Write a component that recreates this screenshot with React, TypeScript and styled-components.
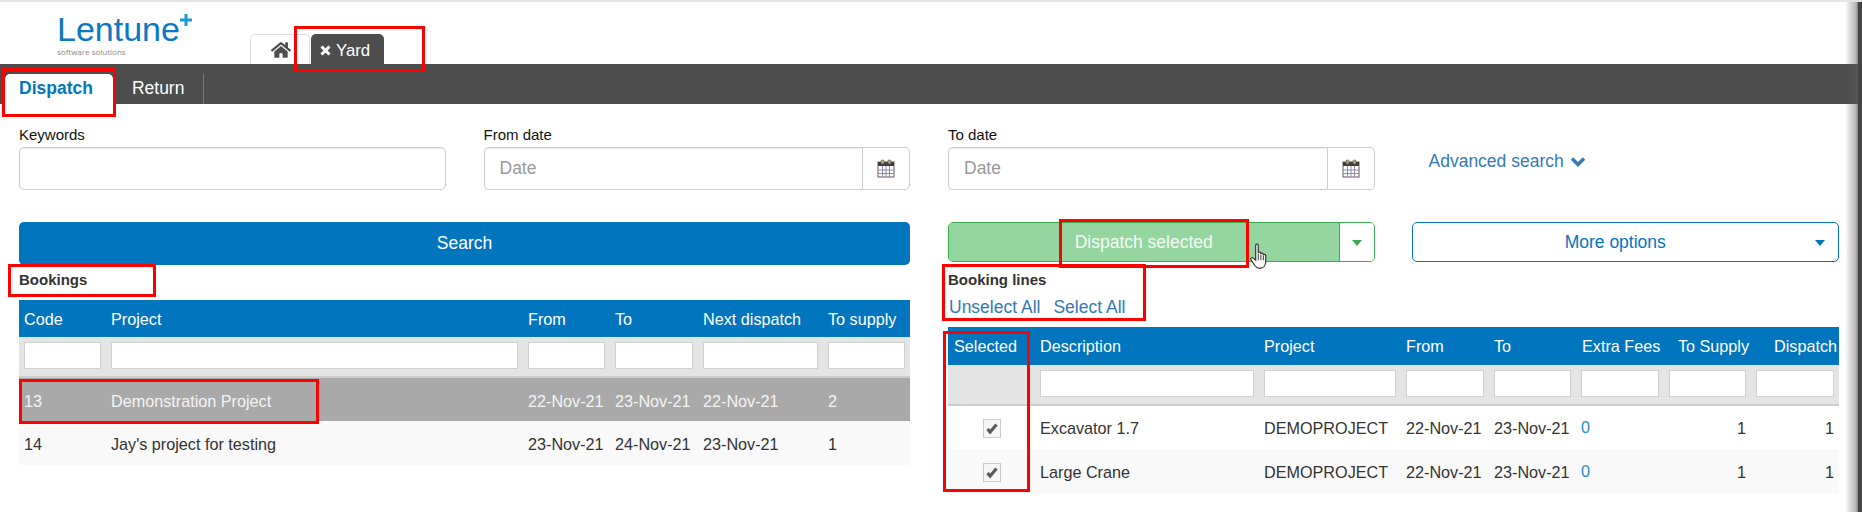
import React from 'react';
import styled, { createGlobalStyle } from 'styled-components';
import { FaHome } from 'react-icons/fa';

const GlobalStyle = createGlobalStyle`
	html, body {
		margin: 0;
		padding: 0;
		background: #fff;
		overflow: hidden;
	}
	* {
		box-sizing: border-box;
	}
`;

const Page = styled.div`
	position: relative;
	width: 1862px;
	height: 512px;
	overflow: hidden;
	border-top: 2px solid #e4e4e4;
	font-family: 'Liberation Sans', Arial, sans-serif;
	font-size: 16.2px;
	color: #333;
`;

const Header = styled.header`
	display: flex;
	align-items: flex-end;
	height: 62px;
	padding-left: 57px;
`;

const Logo = styled.div`
	position: relative;
	width: 193px;
	align-self: flex-start;
	padding-top: 9px;
`;

const LogoWord = styled.div`
	font-size: 34px;
	line-height: 36px;
	color: #0b78bf;
`;

const LogoPlus = styled.svg`
	position: absolute;
	left: 122px;
	top: 11px;
`;

const LogoTag = styled.div`
	font-family: 'Open Sans', sans-serif;
	font-size: 8px;
	line-height: 10px;
	color: #8a8a8a;
`;

const Tab = styled.div<{ $dark?: boolean }>`
	display: flex;
	align-items: center;
	justify-content: ${(p) => (p.$dark ? 'flex-start' : 'center')};
	gap: 5px;
	width: ${(p) => (p.$dark ? '73px' : '60px')};
	height: 30px;
	margin-right: 1px;
	padding: ${(p) => (p.$dark ? '3px 0 0 9px' : '0 0 0 2px')};
	border: ${(p) => (p.$dark ? 'none' : '1px solid #ddd')};
	border-bottom: none;
	border-radius: 5px 5px 0 0;
	background: ${(p) => (p.$dark ? '#4d4d4d' : '#fff')};
	color: ${(p) => (p.$dark ? '#fff' : '#4d4d4d')};
	font-size: 16.8px;
`;

const NavBar = styled.nav`
	display: flex;
	align-items: flex-end;
	height: 40px;
	padding-left: 5px;
	background: #4d4d4d;
	font-size: 17.5px;
`;

const NavItem = styled.div<{ $active?: boolean }>`
	height: 30px;
	padding: 4px ${(p) => (p.$active ? '20px' : '19px')} 0 ${(p) => (p.$active ? '14px' : '19px')};
	line-height: 20px;
	border-radius: ${(p) => (p.$active ? '5px 5px 0 0' : '0')};
	border-right: ${(p) => (p.$active ? 'none' : '1px solid #777')};
	background: ${(p) => (p.$active ? '#fff' : 'transparent')};
	color: ${(p) => (p.$active ? '#0275bf' : '#fff')};
	font-weight: ${(p) => (p.$active ? 700 : 400)};
`;

const Content = styled.main`
	padding: 22px 23px 0 19px;
`;

const FormGrid = styled.section`
	display: grid;
	grid-template-columns: repeat(4, 1fr);
	column-gap: 38px;
	row-gap: 32px;
`;

const Field = styled.div`
	display: flex;
	flex-direction: column;
`;

const Label = styled.label`
	height: 21px;
	font-size: 15px;
	line-height: 18px;
	color: #111;
`;

const TextBox = styled.input`
	flex: 1;
	min-width: 0;
	height: 43px;
	padding: 0 15px;
	border: 1px solid #ccc;
	border-radius: 5px;
	box-shadow: inset 0 1px 1px rgba(0, 0, 0, 0.075);
	font-family: inherit;
	font-size: 17.5px;
	color: #555;
	outline: none;
	&::placeholder {
		color: #999;
		opacity: 1;
	}
`;

const DateGroup = styled.div`
	display: flex;
	${TextBox} {
		border-radius: 5px 0 0 5px;
		border-right: none;
	}
`;

const DateAddon = styled.div`
	display: flex;
	align-items: center;
	justify-content: center;
	width: 48px;
	height: 43px;
	border: 1px solid #ccc;
	border-radius: 0 5px 5px 0;
	background: #fff;
`;

const AdvancedLink = styled.a`
	display: flex;
	align-items: center;
	gap: 6px;
	height: 24px;
	margin: 23px 0 0 16px;
	font-size: 17.5px;
	color: #337ab7;
`;

const SearchButton = styled.button`
	grid-column: span 2;
	height: 43px;
	border: none;
	border-radius: 5px;
	background: #0275bf;
	color: #fff;
	font-family: inherit;
	font-size: 17.5px;
`;

const SplitButton = styled.div`
	display: flex;
	height: 40px;
	border: 1px solid #3aab4f;
	border-radius: 5px;
	overflow: hidden;
`;

const SplitLabel = styled.div`
	flex: 1;
	display: flex;
	align-items: center;
	justify-content: center;
	background: #95d5a0;
	color: #f4fbf5;
	font-size: 17.5px;
`;

const SplitToggle = styled.div`
	display: flex;
	align-items: center;
	justify-content: center;
	width: 35px;
	border-left: 1px solid #3aab4f;
	background: #fff;
`;

const Caret = styled.span<{ $color: string }>`
	display: block;
	margin-top: 2px;
	border-top: 6px solid ${(p) => p.$color};
	border-left: 5px solid transparent;
	border-right: 5px solid transparent;
`;

const OptionsButton = styled.div`
	display: flex;
	align-items: center;
	height: 40px;
	margin-left: -1px;
	padding-right: 13px;
	border: 1px solid #0275bf;
	border-radius: 5px;
	color: #0275bf;
	font-size: 17.5px;
`;

const OptionsLabel = styled.span`
	flex: 1;
	padding-left: 3px;
	text-align: center;
`;

const Panels = styled.section`
	display: grid;
	grid-template-columns: 891px 891px;
	column-gap: 38px;
`;

const Panel = styled.div`
	padding-top: 5px;
`;

const PanelTitle = styled.h4<{ $tight?: boolean }>`
	margin: 0 0 ${(p) => (p.$tight ? '6px' : '10px')};
	font-size: 15px;
	line-height: 20px;
	font-weight: 700;
	color: #333;
`;

const SelectLinks = styled.div`
	display: flex;
	gap: 13px;
	height: 22px;
	margin: 0 0 9px 1px;
	font-size: 17.5px;
	line-height: 22px;
	color: #337ab7;
`;

const Table = styled.table<{ $rowNudge: number; $headNudge: number }>`
	width: 891px;
	table-layout: fixed;
	border-collapse: collapse;
	font-size: 16.2px;
	thead th {
		padding-top: ${(p) => p.$headNudge}px;
	}
	tbody td {
		padding-top: ${(p) => p.$rowNudge}px;
	}
`;

const Col = styled.col<{ $w: number }>`
	width: ${(p) => p.$w}px;
`;

const HeadRow = styled.tr<{ $h: number }>`
	height: ${(p) => p.$h}px;
	background: #0275bf;
`;

const HeadCell = styled.th<{ $right?: boolean; $inset?: number }>`
	padding: 0 ${(p) => (p.$right ? '2px' : '0')} 0 ${(p) => p.$inset ?? 5}px;
	font-weight: 400;
	color: #fff;
	text-align: ${(p) => (p.$right ? 'right' : 'left')};
	white-space: nowrap;
`;

const FilterRow = styled.tr`
	height: 40px;
	background: #e4e4e4;
	border-bottom: 2px solid #ccc;
`;

const FilterCell = styled.td`
	padding: 0 5px 2px;
`;

const FilterInput = styled.input`
	display: block;
	width: 100%;
	height: 27px;
	border: 1.5px solid #cfcfcf;
	border-radius: 0;
	background: #fff;
	outline: none;
`;

const Row = styled.tr<{ $h: number; $tone?: 'active' | 'alt' }>`
	height: ${(p) => p.$h}px;
	background: ${(p) => (p.$tone === 'active' ? '#a9a9a9' : p.$tone === 'alt' ? '#f9f9f9' : '#fff')};
	color: ${(p) => (p.$tone === 'active' ? '#f4f4f4' : '#333')};
`;

const Cell = styled.td<{ $right?: boolean; $center?: boolean }>`
	padding: 0 5px;
	text-align: ${(p) => (p.$right ? 'right' : p.$center ? 'center' : 'left')};
	white-space: nowrap;
`;

const FeeLink = styled.a`
	position: relative;
	top: -1px;
	color: #2a8ccc;
`;

const CheckBox = styled.span`
	display: inline-flex;
	align-items: center;
	justify-content: center;
	vertical-align: middle;
	width: 18px;
	height: 19px;
	margin-top: -2px;
	border: 1px solid #ccc;
	background: #f6f6f6;
`;

const Mark = styled.div<{ $x: number; $y: number; $w: number; $h: number }>`
	position: absolute;
	left: ${(p) => p.$x}px;
	top: ${(p) => p.$y - 2}px;
	width: ${(p) => p.$w}px;
	height: ${(p) => p.$h}px;
	border: 3px solid #f00;
	pointer-events: none;
`;

const Cursor = styled.svg`
	position: absolute;
	left: 1249px;
	top: 241px;
`;

const WindowEdge = styled.div`
	position: absolute;
	top: -2px;
	right: 0;
	bottom: 0;
	width: 17px;
	background: linear-gradient(
		to right,
		rgba(90, 90, 90, 0) 0,
		rgba(90, 90, 90, 0.45) 11px,
		rgba(90, 90, 90, 0.8) 13px,
		#444 13px,
		#444 100%
	);
`;

const CalendarIcon = () => (
	<svg width='18' height='19' viewBox='0 0 18 19'>
		<rect x='1' y='3' width='16' height='15' fill='#fff' stroke='#6d5560' />
		<rect x='1' y='3' width='16' height='4' fill='#3f3f3f' />
		<path d='M1 11h16M1 14.5h16M5.5 7v11M9 7v11M12.5 7v11' stroke='#8d88ad' strokeWidth='1' fill='none' />
		<rect x='4' y='1' width='3' height='4' rx='1' fill='#d9a441' stroke='#2f5f8f' strokeWidth='0.6' />
		<rect x='11' y='1' width='3' height='4' rx='1' fill='#d9a441' stroke='#2f5f8f' strokeWidth='0.6' />
	</svg>
);

const CheckIcon = () => (
	<svg width='14' height='13' viewBox='0 0 14 13'>
		<path d='M2.5 7l2.6 3L11.5 2.5' fill='none' stroke='#5a5a5a' strokeWidth='3.2' />
	</svg>
);

const CloseIcon = () => (
	<svg width='11' height='11' viewBox='0 0 11 11'>
		<path d='M1.5 1.5l8 8M9.5 1.5l-8 8' fill='none' stroke='#fff' strokeWidth='3' />
	</svg>
);

const ChevronIcon = () => (
	<svg width='16' height='11' viewBox='0 0 16 11'>
		<path d='M2 2.5l6 6 6-6' fill='none' stroke='#337ab7' strokeWidth='3.4' />
	</svg>
);

const bookingCols = [87, 417, 87, 88, 125, 87];
const lineCols = [87, 224, 142, 88, 87, 88, 87, 88];
const lines = ['Excavator 1.7', 'Large Crane'];

const App = () => {
	return (
		<Page>
			<GlobalStyle />
			<Header>
				<Logo>
					<LogoWord>Lentune</LogoWord>
					<LogoTag>software solutions</LogoTag>
					<LogoPlus width='14' height='14' viewBox='0 0 14 14'>
						<path d='M7 1v12M1 7h12' stroke='#1b9ad6' strokeWidth='3' />
					</LogoPlus>
				</Logo>
				<Tab>
					<FaHome size={20} />
				</Tab>
				<Tab $dark>
					<CloseIcon />
					Yard
				</Tab>
			</Header>
			<NavBar>
				<NavItem $active>Dispatch</NavItem>
				<NavItem>Return</NavItem>
			</NavBar>
			<Content>
				<FormGrid>
					<Field>
						<Label>Keywords</Label>
						<TextBox readOnly />
					</Field>
					<Field>
						<Label>From date</Label>
						<DateGroup>
							<TextBox readOnly placeholder='Date' />
							<DateAddon>
								<CalendarIcon />
							</DateAddon>
						</DateGroup>
					</Field>
					<Field>
						<Label>To date</Label>
						<DateGroup>
							<TextBox readOnly placeholder='Date' />
							<DateAddon>
								<CalendarIcon />
							</DateAddon>
						</DateGroup>
					</Field>
					<AdvancedLink>
						Advanced search <ChevronIcon />
					</AdvancedLink>
					<SearchButton>Search</SearchButton>
					<SplitButton>
						<SplitLabel>Dispatch selected</SplitLabel>
						<SplitToggle>
							<Caret $color='#3aab4f' />
						</SplitToggle>
					</SplitButton>
					<OptionsButton>
						<OptionsLabel>More options</OptionsLabel>
						<Caret $color='#0275bf' />
					</OptionsButton>
				</FormGrid>
				<Panels>
					<Panel>
						<PanelTitle>Bookings</PanelTitle>
						<Table $rowNudge={3} $headNudge={2}>
							<colgroup>
								{bookingCols.map((w, i) => (
									<Col key={i} $w={w} />
								))}
							</colgroup>
							<thead>
								<HeadRow $h={37}>
									<HeadCell>Code</HeadCell>
									<HeadCell>Project</HeadCell>
									<HeadCell>From</HeadCell>
									<HeadCell>To</HeadCell>
									<HeadCell>Next dispatch</HeadCell>
									<HeadCell>To supply</HeadCell>
								</HeadRow>
								<FilterRow>
									{bookingCols.map((_, i) => (
										<FilterCell key={i}>
											<FilterInput readOnly />
										</FilterCell>
									))}
								</FilterRow>
							</thead>
							<tbody>
								<Row $h={44} $tone='active'>
									<Cell>13</Cell>
									<Cell>Demonstration Project</Cell>
									<Cell>22-Nov-21</Cell>
									<Cell>23-Nov-21</Cell>
									<Cell>22-Nov-21</Cell>
									<Cell>2</Cell>
								</Row>
								<Row $h={44} $tone='alt'>
									<Cell>14</Cell>
									<Cell>Jay's project for testing</Cell>
									<Cell>23-Nov-21</Cell>
									<Cell>24-Nov-21</Cell>
									<Cell>23-Nov-21</Cell>
									<Cell>1</Cell>
								</Row>
							</tbody>
						</Table>
					</Panel>
					<Panel>
						<PanelTitle $tight>Booking lines</PanelTitle>
						<SelectLinks>
							<a>Unselect All</a>
							<a>Select All</a>
						</SelectLinks>
						<Table $rowNudge={2} $headNudge={0}>
							<colgroup>
								{lineCols.map((w, i) => (
									<Col key={i} $w={w} />
								))}
							</colgroup>
							<thead>
								<HeadRow $h={38}>
									<HeadCell $inset={6}>Selected</HeadCell>
									<HeadCell>Description</HeadCell>
									<HeadCell>Project</HeadCell>
									<HeadCell>From</HeadCell>
									<HeadCell>To</HeadCell>
									<HeadCell $inset={6}>Extra Fees</HeadCell>
									<HeadCell $right>To Supply</HeadCell>
									<HeadCell $right>Dispatch</HeadCell>
								</HeadRow>
								<FilterRow>
									{lineCols.map((_, i) => (
										<FilterCell key={i}>{i > 0 && <FilterInput readOnly />}</FilterCell>
									))}
								</FilterRow>
							</thead>
							<tbody>
								{lines.map((name, i) => (
									<Row key={name} $h={44} $tone={i % 2 ? 'alt' : undefined}>
										<Cell $center>
											<CheckBox>
												<CheckIcon />
											</CheckBox>
										</Cell>
										<Cell>{name}</Cell>
										<Cell>DEMOPROJECT</Cell>
										<Cell>22-Nov-21</Cell>
										<Cell>23-Nov-21</Cell>
										<Cell>
											<FeeLink>0</FeeLink>
										</Cell>
										<Cell $right>1</Cell>
										<Cell $right>1</Cell>
									</Row>
								))}
							</tbody>
						</Table>
					</Panel>
				</Panels>
			</Content>
			<Cursor width='22' height='28' viewBox='0 0 20 26'>
				<path
					d='M6 2.2c0-1.6 2.4-1.6 2.4 0v7.3c0-1.5 2.3-1.5 2.3 0v1c0-1.4 2.3-1.4 2.3 0v1c0-1.3 2.3-1.3 2.3 0v6c0 3.4-2.2 6-5.4 6H9.5c-2 0-3.2-1-4.2-2.4L1.6 15.6c-.9-1.4 1-2.8 2.2-1.6L6 16V2.2z'
					fill='#fff'
					stroke='#333'
					strokeWidth='1.1'
				/>
				<path d='M8.4 10v6M10.8 11v5M13.1 12v4' stroke='#333' strokeWidth='0.9' fill='none' />
			</Cursor>
			<Mark $x={294} $y={26} $w={131} $h={46} />
			<Mark $x={2} $y={68} $w={114} $h={49} />
			<Mark $x={8} $y={264} $w={148} $h={33} />
			<Mark $x={19} $y={379} $w={300} $h={45} />
			<Mark $x={1059} $y={219} $w={190} $h={49} />
			<Mark $x={942} $y={264} $w={204} $h={57} />
			<Mark $x={943} $y={331} $w={87} $h={161} />
			<WindowEdge />
		</Page>
	);
};

export default App;
